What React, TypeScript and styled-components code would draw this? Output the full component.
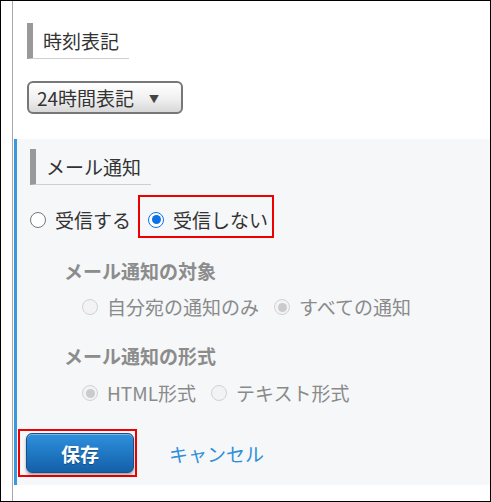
import styled, { createGlobalStyle } from 'styled-components';

const GlobalStyle = createGlobalStyle`
  html, body {
    margin: 0;
    padding: 0;
    background: #fff;
  }
  body {
    font-family: "Noto Sans CJK JP", "Liberation Sans", sans-serif;
    color: #333;
  }
`;

const Frame = styled.div`
  width: 491px;
  height: 502px;
  box-sizing: border-box;
  border: 1px solid #000;
  padding-left: 11px;
  display: flex;
  overflow: hidden;
`;

const Column = styled.div`
  flex: 1;
  border-left: 1px solid #a9a9a9;
  padding: 22px 0 0 1px;
  display: flex;
  flex-direction: column;
`;

const Block = styled.div`
  padding-left: 13px;
  display: flex;
  flex-direction: column;
  align-items: flex-start;
`;

const Heading = styled.div<{ $indent?: number }>`
  box-sizing: border-box;
  height: 36px;
  line-height: 35px;
  font-size: 19px;
  color: #333;
  border-left: 6px solid #999;
  border-bottom: 1px solid #cfcfcf;
  padding: 0 10px 0 10px;
  margin-left: ${(p) => p.$indent ?? 0}px;
`;

const SelectBox = styled.div`
  margin-top: 22px;
  box-sizing: border-box;
  width: 156px;
  height: 33px;
  border: 2px solid #777;
  border-radius: 6px;
  background: linear-gradient(#ffffff, #f0f0f0 55%, #d8d8d8);
  box-shadow: inset 0 1px 0 #fff;
  display: flex;
  align-items: center;
  padding-left: 8px;
  font-size: 19px;
  color: #333;
`;

const Caret = styled.span`
  font-size: 10px;
  color: #444;
  margin-left: 15px;
  margin-top: 2px;
`;

const Panel = styled.div`
  margin-top: 25px;
  background: #f5f7f9;
  border-left: 3px solid #3a98dd;
  padding: 10px 0 8px 0;
  display: flex;
  flex-direction: column;
  align-items: flex-start;
`;

const RadioRow = styled.div<{ $indent: number; $top: number }>`
  display: flex;
  align-items: center;
  margin: ${(p) => p.$top}px 0 0 ${(p) => p.$indent}px;
`;

const Highlight = styled.div<{ $pad: string }>`
  box-sizing: border-box;
  display: flex;
  align-items: center;
  border: 2px solid ${(p) => (p.$pad ? '#ee0000' : 'transparent')};
  padding: ${(p) => p.$pad || '0'};
`;

const Label = styled.label<{ $disabled?: boolean; $gap: number }>`
  display: inline-flex;
  align-items: center;
  font-size: 19px;
  line-height: 26px;
  color: ${(p) => (p.$disabled ? '#8a8a8a' : '#333')};
  margin-right: ${(p) => p.$gap}px;
`;

const Circle = styled.span<{ $checked?: boolean; $disabled?: boolean }>`
  box-sizing: border-box;
  width: 16px;
  height: 16px;
  border-radius: 50%;
  margin-right: 9px;
  flex: none;
  border: 1.5px solid
    ${(p) =>
      p.$disabled ? '#d2d2d2' : p.$checked ? '#0b72e7' : '#777'};
  background: ${(p) => (p.$disabled ? '#f3f3f3' : '#fff')};
  display: flex;
  align-items: center;
  justify-content: center;
  &::after {
    content: '';
    display: ${(p) => (p.$checked ? 'block' : 'none')};
    width: 9px;
    height: 9px;
    border-radius: 50%;
    background: ${(p) => (p.$disabled ? '#cbcbcb' : '#0b72e7')};
  }
`;

const SubHeading = styled.div<{ $top: number }>`
  margin: ${(p) => p.$top}px 0 0 47px;
  font-size: 19px;
  line-height: 26px;
  font-weight: bold;
  color: #8c8c8c;
`;

const Actions = styled.div`
  margin-top: 23px;
  display: flex;
  align-items: center;
`;

const ButtonWrap = styled.div`
  box-sizing: border-box;
  border: 2px solid #ee0000;
  padding: 2px 1px 2px 6px;
  margin-left: 1px;
`;

const SaveButton = styled.button`
  box-sizing: border-box;
  width: 108px;
  height: 40px;
  border: 1px solid #1b4e86;
  border-radius: 6px;
  background: linear-gradient(#3090dc, #1f78c4 50%, #155fa8);
  box-shadow: 0 2px 3px rgba(0, 0, 0, 0.35), inset 0 1px 0 rgba(255, 255, 255, 0.35);
  color: #fff;
  font-family: inherit;
  font-size: 19px;
  font-weight: bold;
  text-shadow: 0 1px 1px rgba(0, 0, 0, 0.3);
  cursor: pointer;
`;

const CancelLink = styled.a`
  margin-left: 32px;
  font-size: 19px;
  color: #2f8fd8;
  text-decoration: none;
  cursor: pointer;
`;

type Opt = { text: string; checked?: boolean; gap: number };

const Radio = ({ opt, disabled }: { opt: Opt; disabled?: boolean }) => (
  <Label $disabled={disabled} $gap={opt.gap}>
    <Circle $checked={opt.checked} $disabled={disabled} />
    {opt.text}
  </Label>
);

const App = () => {
  return (
    <>
      <GlobalStyle />
      <Frame>
        <Column>
          <Block>
            <Heading>時刻表記</Heading>
            <SelectBox>
              24時間表記
              <Caret>▼</Caret>
            </SelectBox>
          </Block>
          <Panel>
            <Heading $indent={13}>メール通知</Heading>
            <RadioRow $indent={11} $top={10}>
              <Highlight $pad="" style={{ paddingTop: 6 }}>
                <Radio opt={{ text: '受信する', gap: 5 }} />
              </Highlight>
              <Highlight $pad="6px 4px 0 8px" style={{ height: 43 }}>
                <Radio opt={{ text: '受信しない', checked: true, gap: 0 }} />
              </Highlight>
            </RadioRow>
            <SubHeading $top={20}>メール通知の対象</SubHeading>
            <RadioRow $indent={65} $top={10}>
              <Radio disabled opt={{ text: '自分宛の通知のみ', gap: 15 }} />
              <Radio disabled opt={{ text: 'すべての通知', checked: true, gap: 0 }} />
            </RadioRow>
            <SubHeading $top={23}>メール通知の形式</SubHeading>
            <RadioRow $indent={65} $top={11}>
              <Radio disabled opt={{ text: 'HTML形式', checked: true, gap: 15 }} />
              <Radio disabled opt={{ text: 'テキスト形式', gap: 0 }} />
            </RadioRow>
            <Actions>
              <ButtonWrap>
                <SaveButton>保存</SaveButton>
              </ButtonWrap>
              <CancelLink>キャンセル</CancelLink>
            </Actions>
          </Panel>
        </Column>
      </Frame>
    </>
  );
};

export default App;
